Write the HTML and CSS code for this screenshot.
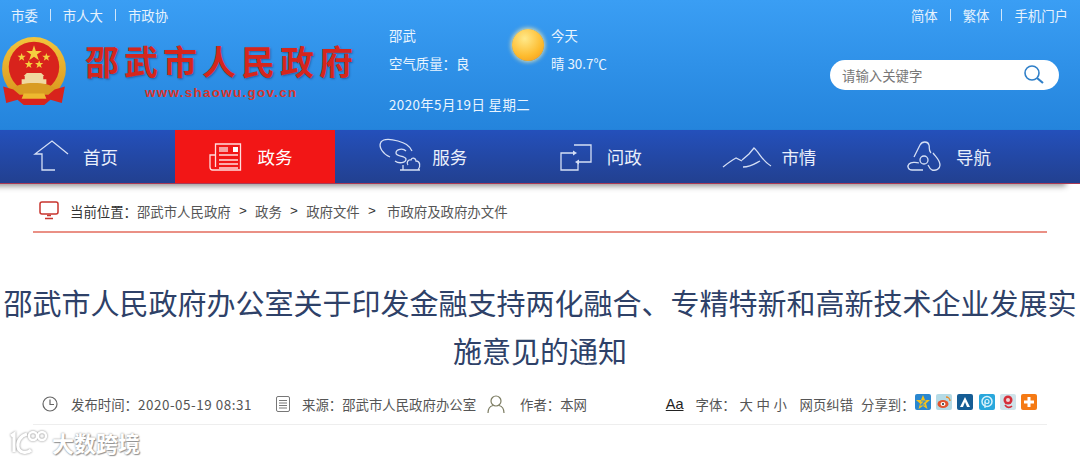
FILE: index.html
```html
<!DOCTYPE html>
<html lang="zh-CN">
<head>
  <meta charset="UTF-8">
  <title>邵武市人民政府</title>
  <link rel="stylesheet" href="styles.css">
</head>
<body>

  <header class="top">
    <div class="top-left">
      <div class="links">
        <a>市委</a><i></i><a>市人大</a><i></i><a>市政协</a>
      </div>
      <div class="logo">
        <svg class="emblem" width="66" height="70" viewBox="0 0 64 68">
          <defs>
            <linearGradient id="gold" x1="0" y1="0" x2="0" y2="1">
              <stop offset="0" stop-color="#f2c53c"/>
              <stop offset="1" stop-color="#d9941c"/>
            </linearGradient>
          </defs>
          <circle cx="32" cy="31" r="31" fill="url(#gold)"/>
          <circle cx="32" cy="29" r="24.5" fill="#d8231c"/>
          <polygon fill="#f5cf3f" points="32,8 33.8,13.5 39.6,13.5 34.9,17 36.7,22.6 32,19.1 27.3,22.6 29.1,17 24.4,13.5 30.2,13.5"/>
          <polygon fill="#f5cf3f" points="20,15.5 21,18.3 24,18.3 21.6,20.1 22.5,23 20,21.3 17.5,23 18.4,20.1 16,18.3 19,18.3"/>
          <polygon fill="#f5cf3f" points="44,15.5 45,18.3 48,18.3 45.6,20.1 46.5,23 44,21.3 41.5,23 42.4,20.1 40,18.3 43,18.3"/>
          <polygon fill="#f5cf3f" points="27,22.5 28,25.3 31,25.3 28.6,27.1 29.5,30 27,28.3 24.5,30 25.4,27.1 23,25.3 26,25.3"/>
          <polygon fill="#f5cf3f" points="37,22.5 38,25.3 41,25.3 38.6,27.1 39.5,30 37,28.3 34.5,30 35.4,27.1 33,25.3 36,25.3"/>
          <path fill="#f0d9a0" d="M25 35h14l3 3h-20zM23 38h18v3h3v5H20v-5h3z"/>
          <path fill="#d99c22" d="M12 50c6-7 34-7 40 0l2 6H10z"/>
          <path fill="#d8231c" d="M2 48l10 3 6 5h28l6-5 10-3-3 16-11-3-6 5H22l-6-5-11 3z"/>
          <path fill="#eeb92f" d="M22 55h20l2 5H20z"/>
        </svg>
        <div class="logo-text">
          <h1>邵武市人民政府</h1>
          <p>www.shaowu.gov.cn</p>
        </div>
      </div>
    </div>

    <div class="weather">
      <div class="weather-col">
        <span>邵武</span>
        <span>空气质量：良</span>
      </div>
      <div class="sun"></div>
      <div class="weather-col">
        <span>今天</span>
        <span>晴 30.7℃</span>
      </div>
      <div class="date">2020年5月19日 星期二</div>
    </div>

    <div class="top-right">
      <div class="links">
        <a>简体</a><i></i><a>繁体</a><i></i><a>手机门户</a>
      </div>
      <div class="search">
        <input type="text" placeholder="请输入关键字">
        <svg width="22" height="20" viewBox="0 0 22 20" fill="none" stroke="#2f7fc8">
          <circle cx="9" cy="8" r="7" stroke-width="1.6"/>
          <path d="M14 13l6 5" stroke-width="2.2"/>
        </svg>
      </div>
    </div>
  </header>

  <nav class="nav">
    <a class="nav-item">
      <svg class="nav-icon" viewBox="0 0 83 53" fill="none">
        <path d="M55 40H42V24H35L52 11L68 24"/>
      </svg>
      首页
    </a>
    <a class="nav-item active">
      <svg class="nav-icon" viewBox="0 0 83 53" fill="none">
        <path d="M40.500 37V14H65.500V40H37.500Q35 40 35 37V25H40.500"/>
        <path d="M44 25H63M44 30H63M44 34H63M44 38H63"/>
        <rect x="44" y="17" width="9" height="5" fill="#f7a0a0" stroke="none"/>
        <rect x="58" y="17" width="5" height="5" fill="#fff" stroke="none"/>
      </svg>
      政务
    </a>
    <a class="nav-item">
      <svg class="nav-icon" viewBox="0 0 83 53" fill="none">
        <path d="M41 27C34 24 29 17 32 12C35 8 42 9 49 11C56 13 60 15 63 21"/>
        <path d="M57 21C54 18 47 19 47 23C47 27 56 25 57 29C57 33 50 34 46 31"/>
        <path d="M51 40H71M54 40V35M59 35C57 33 59 29 62 30C63 27 67 28 67 31C71 31 72 36 69 40"/>
      </svg>
      服务
    </a>
    <a class="nav-item">
      <svg class="nav-icon" viewBox="0 0 83 53" fill="none">
        <path d="M49 23H37V40H54V33"/>
        <path d="M50 15H67V32H55"/>
        <polygon points="49,20.500 53,23 49,25.500" fill="#d5dff5" stroke="none"/>
        <polygon points="55,29.500 51,32 55,34.500" fill="#d5dff5" stroke="none"/>
      </svg>
      问政
    </a>
    <a class="nav-item">
      <svg class="nav-icon" viewBox="0 0 83 53" fill="none">
        <path d="M25 37C30 33 34 30 38 28L44 31"/>
        <path d="M44 30L51 24L56 18C61 22 64 31 73 36"/>
        <path d="M45 37C53 37 58 33 62 31"/>
      </svg>
      市情
    </a>
    <a class="nav-item">
      <svg class="nav-icon" viewBox="0 0 83 53" fill="none">
        <circle cx="51" cy="30" r="4"/>
        <path d="M41 27L47 15C49 11 55 11 56 15C57 18 55 20 58 23"/>
        <path d="M60 23C63 27 67 30 67 35C67 39 63 41 59 40C57 39 56 37 55 35"/>
        <path d="M50 40H39C35 40 34 36 36 34C38 32 43 32 46 33"/>
      </svg>
      导航
    </a>
  </nav>

  <div class="crumb">
    <svg class="crumb-icon" width="20" height="19" viewBox="0 0 20 19" fill="none" stroke="#c8352e">
      <rect x="1" y="1" width="18" height="12" rx="2" stroke-width="1.500"/>
      <path d="M8 14.500h4M6 17.500h8" stroke-width="1.500"/>
    </svg>
    <b>当前位置：</b>
    <a>邵武市人民政府</a><em>&gt;</em>
    <a>政务</a><em>&gt;</em>
    <a>政府文件</a><em>&gt;</em>
    <a class="crumb-last">市政府及政府办文件</a>
  </div>

  <h2 class="title">邵武市人民政府办公室关于印发金融支持两化融合、专精特新和高新技术企业发展实施意见的通知</h2>

  <div class="meta">
    <svg class="meta-icon clock" width="16" height="16" viewBox="0 0 16 16" fill="none" stroke="#666" stroke-width="1.200">
      <circle cx="8" cy="8" r="7"/>
      <path d="M8 3.500V8.500H12"/>
    </svg>
    <span class="meta-time">发布时间：<span class="num">2020-05-19 08:31</span></span>
    <svg class="meta-icon doc" width="14" height="16" viewBox="0 0 14 16" fill="none" stroke="#777">
      <rect x="0.500" y="0.500" width="13" height="15" rx="1.500"/>
      <path d="M3 4.500h8M3 7h8M3 9.500h8M3 12h8"/>
    </svg>
    <span class="meta-source">来源：邵武市人民政府办公室</span>
    <svg class="meta-icon user" width="18" height="18" viewBox="0 0 18 18" fill="none" stroke="#7c7c62" stroke-width="1.200">
      <circle cx="9" cy="6" r="5"/>
      <path d="M1 18C1 13 4 11 6 10.500M17 18C17 13 14 11 12 10.500"/>
    </svg>
    <span>作者：本网</span>

    <div class="meta-right">
      <u class="aa">Aa</u>
      <span class="font-label">字体：</span>
      <span class="sizes"><a>大</a><a>中</a><a>小</a></span>
      <a class="fix">网页纠错</a>
      <span class="share-label">分享到：</span>
      <div class="share">
        <svg width="16" height="16" viewBox="0 0 16 16">
          <rect width="16" height="16" rx="2" fill="#2a87cf"/>
          <polygon fill="#f5c21b" points="8,1 10,6 15,6 11,9.500 12.500,15 8,12 3.500,15 5,9.500 1,6 6,6"/>
          <path d="M6 7h4L6 11h4" fill="none" stroke="#3c8fc9" stroke-width="1.200"/>
        </svg>
        <svg width="16" height="16" viewBox="0 0 16 16">
          <rect width="16" height="16" rx="2" fill="#b5dbe6"/>
          <ellipse cx="7" cy="10" rx="5.500" ry="4" fill="#e2532d"/>
          <ellipse cx="7" cy="10" rx="2.500" ry="2" fill="#fff"/>
          <circle cx="7" cy="10" r="1" fill="#222"/>
          <path d="M10 3a4 4 0 0 1 4 4" fill="none" stroke="#ed8a24" stroke-width="1.400"/>
        </svg>
        <svg width="16" height="16" viewBox="0 0 16 16">
          <rect width="16" height="16" rx="2" fill="#155d95"/>
          <path d="M8 3L3 13h3l2-5 2 5h3z" fill="#fff"/>
        </svg>
        <svg width="16" height="16" viewBox="0 0 16 16">
          <rect width="16" height="16" rx="2" fill="#29a7dc"/>
          <circle cx="8" cy="7.500" r="5" fill="none" stroke="#d8f2fb" stroke-width="1.500"/>
          <circle cx="8" cy="7.500" r="2" fill="none" stroke="#d8f2fb" stroke-width="1.200"/>
          <path d="M6 7.500V14" stroke="#d8f2fb" stroke-width="1.300"/>
        </svg>
        <svg width="16" height="16" viewBox="0 0 16 16">
          <rect width="16" height="16" rx="2" fill="#cfe3ea"/>
          <circle cx="8" cy="6" r="4.500" fill="#d52f3a"/>
          <circle cx="8" cy="6" r="2" fill="#f2d6d6"/>
          <path d="M5 11c2 3 5 3 7 1" fill="none" stroke="#d52f3a" stroke-width="1.600"/>
        </svg>
        <svg width="16" height="16" viewBox="0 0 16 16">
          <rect width="16" height="16" rx="2" fill="#f57a14"/>
          <path d="M8 3V13M3 8H13" stroke="#fff" stroke-width="3"/>
        </svg>
      </div>
    </div>
  </div>

  <!-- 水印 -->
  <div class="watermark">
    <svg width="38" height="26" viewBox="0 0 38 26" fill="none" stroke="#fff" stroke-width="3.200">
      <path d="M1 7L4 5V23"/>
      <path d="M17 5C10 7 7 13 8 18C9 24 17 25 21 21"/>
      <circle cx="23" cy="7" r="4" stroke-width="2.400"/>
      <circle cx="32" cy="7" r="4" stroke-width="2.400"/>
    </svg>
    <span>大数跨境</span>
  </div>

</body>
</html>
```

FILE: styles.css
```css
* {
  box-sizing: border-box;
}

body {
  margin: 0;
  height: 462px;
  overflow: hidden;
  position: relative;
  background: #fff;
  font-family: "Noto Sans CJK SC", "Liberation Sans", sans-serif;
  font-size: 13.4px;
  color: #555;
}

/* 头部 */
.top {
  display: flex;
  height: 130px;
  background: linear-gradient(#3a9ef4, #2484dc);
  color: #eaf5ff;
}

.top-left {
  width: 389px;
  padding-left: 11px;
}

.links {
  display: flex;
  align-items: center;
  height: 29px;
  font-size: 13.400px;
  color: #e6f2fd;
}

.links i {
  width: 1px;
  height: 12px;
  margin: 0 12px;
  background: #cfe6fb;
}

.logo {
  display: flex;
  margin: 8px 0 0 -10px;
}

.emblem {
  flex: none;
}

.logo-text {
  margin: -1px 0 0 18px;
}

.logo-text h1 {
  margin: 0;
  font-size: 34px;
  line-height: 50px;
  font-weight: 700;
  letter-spacing: 5px;
  white-space: nowrap;
  color: #d5261c;
  text-shadow: 1px 1px 2px rgba(20, 40, 90, 0.45);
}

.logo-text p {
  margin: -1px 0 0 60px;
  font-family: "Liberation Sans", sans-serif;
  font-size: 13.500px;
  line-height: 16px;
  font-weight: 700;
  letter-spacing: 1.250px;
  color: #d9352c;
}

.weather {
  display: grid;
  grid-template-columns: 108px 54px 1fr;
  grid-template-rows: 53px auto;
  width: 441px;
  padding-top: 26px;
  font-size: 13.400px;
}

.weather-col {
  display: flex;
  flex-direction: column;
  gap: 9px;
  line-height: 19px;
}

.sun {
  width: 32px;
  height: 32px;
  margin: 3px 0 0 15px;
  border-radius: 50%;
  background: radial-gradient(circle at 40% 30%, #ffe98a, #fdbb2e 60%, #f0931a);
  box-shadow: 0 0 4px 1px rgba(255, 236, 170, 0.8);
}

.date {
  grid-column: 1 / 4;
  margin-top: 15px;
  line-height: 20px;
  letter-spacing: 0.400px;
}

.top-right {
  flex: 1;
  padding-right: 12px;
}

.top-right .links {
  justify-content: flex-end;
}

.search {
  display: flex;
  align-items: center;
  width: 229px;
  height: 30px;
  margin-top: 31px;
  padding: 0 14px 0 12px;
  border-radius: 15px;
  background: #fff;
}

.search input {
  flex: 1;
  min-width: 0;
  border: 0;
  outline: 0;
  padding: 0;
  font: inherit;
  font-size: 13.400px;
}

.search input::placeholder {
  color: #777;
  opacity: 1;
}

/* 导航 */
.nav {
  display: flex;
  gap: 14.600px;
  height: 54px;
  background: linear-gradient(#2450bb, #224090);
  border-bottom: 1px solid #a83a55;
  box-shadow: -12px 4px 6px -2px rgba(0, 0, 0, 0.45);
  position: relative;
}

.nav-item {
  display: flex;
  align-items: center;
  width: 160px;
  font-size: 17.500px;
  color: #e9effb;
}

.nav-item.active {
  background: #f21616;
  color: #fff;
}

.nav-icon {
  width: 83px;
  height: 53px;
  flex: none;
  stroke: #d5dff5;
  stroke-width: 1.300;
}

.active .nav-icon {
  stroke: #fdd;
}

/* 面包屑 */
.crumb {
  display: flex;
  align-items: center;
  height: 49px;
  margin: 0 33px;
  padding-left: 6px;
  padding-top: 6px;
  border-bottom: 2px solid #ea9085;
  color: #555;
}

.crumb-icon {
  margin-right: 11px;
}

.crumb b {
  font-weight: 400;
  color: #333;
}

.crumb em {
  margin: 0 8.250px;
  font-style: normal;
  font-family: "Liberation Sans", sans-serif;
  color: #333;
}

.crumb-last {
  margin-left: 3px;
}

/* 标题 */
.title {
  margin: 45px 0 0;
  font-size: 29px;
  line-height: 48px;
  font-weight: 400;
  text-align: center;
  color: #2e4168;
}

.meta {
  display: flex;
  align-items: center;
  height: 51px;
  margin: 0 33px;
  padding: 9px 10px 0 9px;
  border-bottom: 1px solid #eee;
  white-space: nowrap;
}

.meta-icon {
  flex: none;
}

.clock {
  margin-right: 13px;
}

.num {
  letter-spacing: 0.550px;
}

.meta-time {
  width: 205px;
}

.doc {
  margin-right: 12px;
}

.meta-source {
  width: 185px;
}

.user {
  margin-right: 15px;
}

.meta-right {
  display: flex;
  align-items: center;
  margin-left: auto;
}

.aa {
  font-family: "Liberation Sans", sans-serif;
  font-size: 14.500px;
  color: #222;
  margin-right: 12px;
}

.font-label {
  width: 44px;
}

.sizes {
  display: flex;
  gap: 3.600px;
  width: 60px;
}

.fix {
  margin-right: 8px;
}

.share-label {
  width: 54px;
}

.share {
  display: flex;
  gap: 5.200px;
  margin-top: -3px;
}

/* 水印 */
.watermark {
  position: absolute;
  left: 10px;
  top: 429px;
  display: flex;
  align-items: center;
  gap: 4px;
  color: #fff;
  font-size: 22px;
  font-weight: 700;
  line-height: 26px;
  text-shadow: 0 0 2px #888, 1px 1px 1px #999;
}

.watermark svg {
  filter: drop-shadow(0 0 1px #888);
}
```
